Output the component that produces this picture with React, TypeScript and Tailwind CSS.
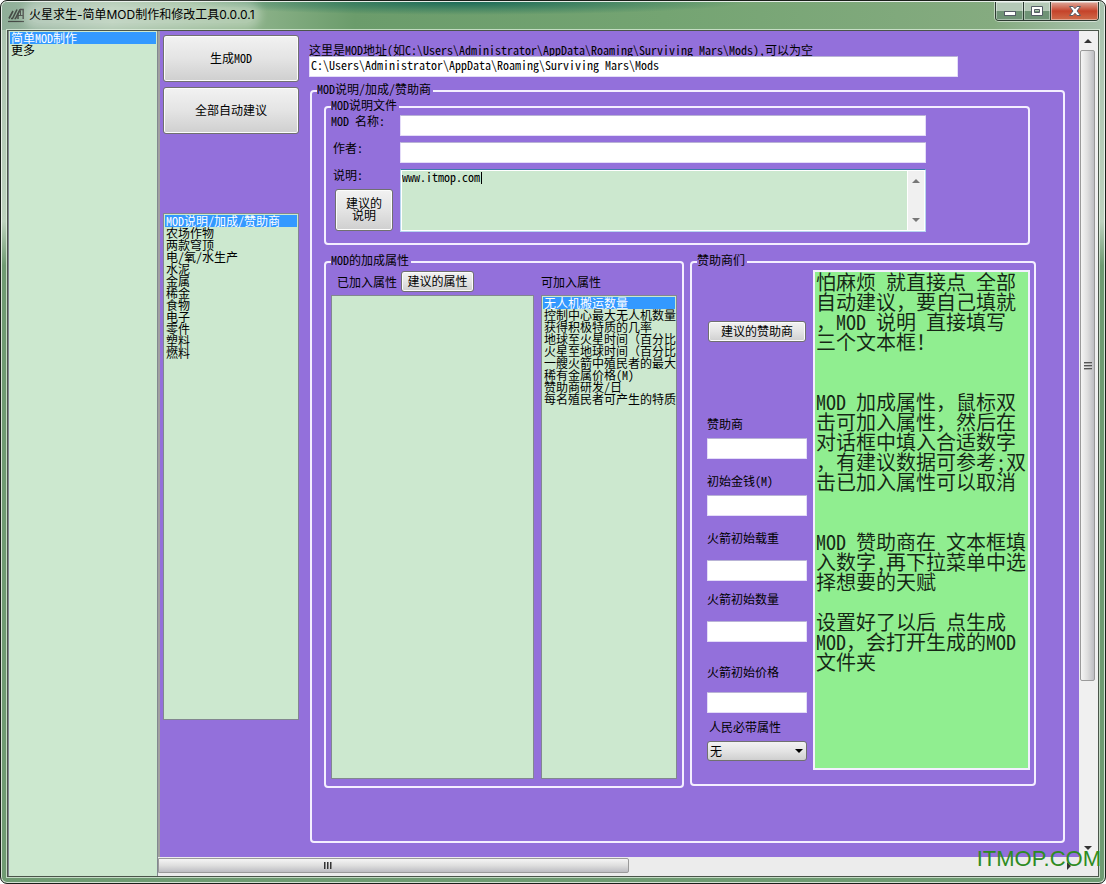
import { useState } from "react";
import type { ReactNode } from "react";

const categories = ["简单MOD制作", "更多"];

const sections = [
  "MOD说明/加成/赞助商",
  "农场作物",
  "两款穹顶",
  "电/氧/水生产",
  "水泥",
  "金属",
  "稀金",
  "食物",
  "电子",
  "零件",
  "塑料",
  "燃料",
];

const attributes = [
  "无人机搬运数量",
  "控制中心最大无人机数量",
  "获得积极特质的几率",
  "地球至火星时间（百分比）",
  "火星至地球时间（百分比）",
  "一艘火箭中殖民者的最大数量",
  "稀有金属价格(M)",
  "赞助商研发/日",
  "每名殖民者可产生的特质",
];

const sponsorFields = [
  { id: "sponsor", label: "赞助商", className: "mt-[76px] gap-2" },
  { id: "money", label: "初始金钱(M)", className: "mt-4 gap-2" },
  { id: "payload", label: "火箭初始载重", className: "mt-4 gap-4" },
  { id: "rockets", label: "火箭初始数量", className: "mt-3 gap-4" },
  { id: "price", label: "火箭初始价格", className: "mt-6 gap-3.5" },
];

const helpText = `怕麻烦 就直接点 全部
自动建议，要自己填就
，MOD 说明 直接填写
三个文本框！


MOD 加成属性，鼠标双
击可加入属性，然后在
对话框中填入合适数字
，有建议数据可参考;双
击已加入属性可以取消


MOD 赞助商在 文本框填
入数字,再下拉菜单中选
择想要的天赋

设置好了以后 点生成
MOD，会打开生成的MOD
文件夹`;

const inputClass =
  "h-[21px] w-full min-w-0 rounded-[1px] border border-[#e4dcf8] border-t-[#b9b3d6] bg-white px-px pb-1 leading-3 outline-none";

interface GroupProps {
  title: string;
  className?: string;
  bodyClassName?: string;
  children: ReactNode;
}

function Group({ title, className, bodyClassName, children }: GroupProps) {
  return (
    <fieldset className={`min-w-0 rounded-[4px] border-2 border-[#f4efff] ${className ?? ""}`}>
      <legend className="ml-[5px] pr-0.5 pb-1 leading-3">{title}</legend>
      <div className={bodyClassName}>{children}</div>
    </fieldset>
  );
}

function Button({ className, children }: { className?: string; children: ReactNode }) {
  return (
    <button
      type="button"
      className={`rounded-[3px] border border-[#707070] bg-linear-to-b from-[#f2f2f2] from-0% via-[#e4e4e4] via-50% to-[#cfcfcf] pb-0.5 leading-3 whitespace-nowrap shadow-[inset_0_0_0_1px_#fcfcfc] ${className ?? ""}`}
    >
      {children}
    </button>
  );
}

function ListBox({ label, items, className }: { label: string; items: string[]; className?: string }) {
  const [selected, setSelected] = useState(0);

  return (
    <ul
      role="listbox"
      aria-label={label}
      className={`overflow-hidden border border-[#828790] bg-[#cce8cf] p-px ${className ?? ""}`}
    >
      {items.map((item, index) => (
        <li
          key={item}
          role="option"
          aria-selected={index === selected}
          onClick={() => setSelected(index)}
          className={`h-3 pl-px leading-3 whitespace-nowrap ${index === selected ? "bg-[#3399ff] text-white" : ""}`}
        >
          {item}
        </li>
      ))}
    </ul>
  );
}

function Arrow({ className }: { className?: string }) {
  return (
    <svg viewBox="0 0 8 4" className={`h-1 w-2 ${className ?? ""}`} aria-hidden="true">
      <path d="M0 4 L4 0 L8 4 Z" fill="currentColor" />
    </svg>
  );
}

function TitleBar() {
  return (
    <header className="-mx-[5px] mt-px flex h-7 items-start justify-between rounded-t-[5px] bg-[radial-gradient(ellipse_280px_13px_at_42%_0,#1c6b58,transparent),linear-gradient(to_right,#8fae98,#a9c4ab_10%,#8fb48c_22%,#6b9c6b_32%,#74a472_60%,#85ab80_90%,#a9c2ad)] px-[5px]">
      <div className="flex items-center gap-1 pt-[5px] pl-px">
        <svg viewBox="0 0 17 16" className="h-4 w-[17px]" fill="none" stroke="#454a45" aria-hidden="true">
          <path d="M1 11.500 L5 4 M3 11.500 H4.500 L9 2.500 M6.500 11.500 H7.500 L12 2.500" strokeWidth="1.600" />
          <path d="M10 12 V7 L12.500 2.500 H15.200 V12" strokeWidth="1.500" />
          <path d="M10 8.500 H15 M12.500 4 V8" />
          <path d="M0 14.500 H16" strokeWidth="1.200" />
        </svg>
        <h1 className="rounded-full bg-white/30 font-['Inter','Noto_Sans_CJK_SC',sans-serif] leading-4 shadow-[0_0_8px_6px_rgba(255,255,255,0.3)]">
          火星求生-简单MOD制作和修改工具0.0.0.1
        </h1>
      </div>
      <div className="flex h-[19px] overflow-hidden rounded-b-[4px] border border-t-0 border-[#2b3a30] shadow-[0_0_0_1px_rgba(255,255,255,0.5)]">
        <button type="button" aria-label="最小化" className="flex w-7 items-center justify-center border-r border-[#2b3a30] bg-linear-to-b from-[#b5c9b7] from-50% to-[#6f9376] to-50% shadow-[inset_0_0_0_1px_rgba(255,255,255,0.4)]">
          <svg viewBox="0 0 12 12" className="size-3" aria-hidden="true">
            <rect x="0.500" y="6.500" width="11" height="4" fill="#fff" stroke="#555c66" />
          </svg>
        </button>
        <button type="button" aria-label="最大化" className="flex w-[27px] items-center justify-center border-r border-[#2b3a30] bg-linear-to-b from-[#b5c9b7] from-50% to-[#6f9376] to-50% shadow-[inset_0_0_0_1px_rgba(255,255,255,0.4)]">
          <svg viewBox="0 0 12 12" className="size-3" aria-hidden="true">
            <path d="M0.500 1.500 H11.500 V10.500 H0.500 Z M3.500 4.500 V7.500 H8.500 V4.500 Z" fill="#fff" fillRule="evenodd" stroke="#555c66" />
          </svg>
        </button>
        <button type="button" aria-label="关闭" className="flex w-[47px] items-center justify-center bg-linear-to-b from-[#dba79a] from-0% via-[#c5422a] via-50% to-[#cf6a4a] shadow-[inset_0_0_0_1px_rgba(255,255,255,0.4)]">
          <svg viewBox="0 0 12 12" className="size-3" aria-hidden="true">
            <path d="M0.500 1.500 H4 L6 3.700 L8 1.500 H11.500 L8 6 L11.500 10.500 H8 L6 8.300 L4 10.500 H0.500 L4 6 Z" fill="#fff" stroke="#555c66" />
          </svg>
        </button>
      </div>
    </header>
  );
}

function DescriptionGroup() {
  return (
    <Group title="MOD说明文件" className="mr-1.5" bodyClassName="pr-[102px] pb-[11px] pl-[5px]">
      <div className="grid grid-cols-[69px_1fr] items-start gap-y-1.5">
        <label htmlFor="mod-name" className="leading-3">MOD 名称:</label>
        <input id="mod-name" className={inputClass} />
        <label htmlFor="author" className="pl-0.5 leading-3">作者:</label>
        <input id="author" className={inputClass} />
        <div className="flex flex-col items-start gap-2 pl-0.5">
          <label htmlFor="description" className="leading-3">说明:</label>
          <Button className="ml-0.5 h-[42px] w-[58px]">
            建议的
            <br />
            说明
          </Button>
        </div>
        <div className="relative flex h-[63px] border border-[#b7d5f0] border-t-[#3d7bad] bg-white p-px">
          <textarea
            id="description"
            defaultValue="www.itmop.com"
            className="min-w-0 flex-1 resize-none bg-[#cce8cf] leading-3 outline-none"
          />
          <span className="absolute top-0.5 left-20 h-3 w-px bg-black" />
          <div className="flex w-[17px] flex-col items-center justify-between border-l border-white bg-[#f0f0f0] py-2 text-[#777]">
            <Arrow />
            <Arrow className="rotate-180" />
          </div>
        </div>
      </div>
    </Group>
  );
}

function AttributeGroup() {
  return (
    <Group title="MOD的加成属性" className="flex-1" bodyClassName="px-[5px] pb-[7px]">
      <div className="grid grid-cols-[203px_minmax(0,1fr)] gap-x-[7px]">
        <div className="flex h-[25px] items-center gap-1 pb-0.5 pl-1.5">
          <span>已加入属性</span>
          <Button className="h-[21px] w-[73px]">建议的属性</Button>
        </div>
        <div className="flex h-[25px] items-center pb-0.5">可加入属性</div>
        <ListBox label="已加入属性" items={[]} className="h-[484px]" />
        <ListBox label="可加入属性" items={attributes} className="h-[484px]" />
      </div>
    </Group>
  );
}

function SponsorGroup() {
  return (
    <Group title="赞助商们" className="w-[346px] shrink-0" bodyClassName="flex gap-1.5 pr-1 pb-3.5 pl-[15px]">
      <div className="flex w-[100px] flex-col pt-[51px]">
        <Button className="mx-px h-[21px]">建议的赞助商</Button>
        {sponsorFields.map((field) => (
          <div key={field.id} className={`flex flex-col ${field.className}`}>
            <label htmlFor={field.id} className="leading-3">{field.label}</label>
            <input id={field.id} className={inputClass} />
          </div>
        ))}
        <div className="mt-2 flex flex-col gap-2">
          <label htmlFor="trait" className="pl-0.5 leading-3">人民必带属性</label>
          <div className="relative">
            <select
              id="trait"
              className="h-5 w-full appearance-none rounded-[3px] border border-[#707070] bg-linear-to-b from-[#f2f2f2] from-0% via-[#e4e4e4] via-50% to-[#cfcfcf] pl-0.5 leading-3"
            >
              <option>无</option>
            </select>
            <Arrow className="pointer-events-none absolute top-2 right-1 rotate-180" />
          </div>
        </div>
      </div>
      <textarea
        aria-label="使用说明"
        wrap="off"
        defaultValue={helpText}
        className="h-[500px] min-w-0 flex-1 resize-none overflow-hidden border-2 border-[#f4efff] bg-[#90ee90] px-px text-[20px] leading-5 text-black/85 outline-none"
      />
    </Group>
  );
}

function VerticalScrollbar() {
  return (
    <div className="flex w-[19px] shrink-0 flex-col items-center bg-[#f0f0f0] pr-0.5">
      <div className="flex h-[19px] items-center text-[#333]">
        <Arrow />
      </div>
      <div className="flex h-[631px] w-[15px] flex-col items-center justify-center gap-px rounded-[2px] border border-[#9a9a9a] bg-linear-to-r from-[#f5f5f5] via-[#dedede] to-[#bdbdc2]">
        <span className="h-0.5 w-2 border-t border-[#555] bg-[#aaa]" />
        <span className="h-0.5 w-2 border-t border-[#555] bg-[#aaa]" />
        <span className="h-0.5 w-2 border-t border-[#555] bg-[#aaa]" />
      </div>
      <div className="mt-auto flex h-[18px] items-center text-[#333]">
        <Arrow className="rotate-180" />
      </div>
    </div>
  );
}

function HorizontalScrollbar() {
  return (
    <div className="flex h-[19px] items-center justify-between bg-[#ececec] pb-0.5 text-[#333]">
      <div className="flex h-[15px] w-[471px] items-center justify-center gap-px rounded-r-[2px] border border-[#9a9a9a] bg-linear-to-b from-[#f5f5f5] via-[#dedede] to-[#bdbdc2] pr-[131px]">
        <span className="h-[7px] w-0.5 border-l border-[#333] bg-[#888]" />
        <span className="h-[7px] w-0.5 border-l border-[#333] bg-[#888]" />
        <span className="h-[7px] w-0.5 border-l border-[#333] bg-[#888]" />
      </div>
      <Arrow className="mr-[25px] rotate-90" />
    </div>
  );
}

export default function App() {
  return (
    <div className="relative flex min-h-screen flex-col rounded-[7px] border border-[#1a1f1a] bg-linear-to-b from-[#a9c2ad] via-[#bdd2be] via-25% to-[#6f9b72] to-30% px-[6px] pb-[6px] font-['Noto_Sans_Mono_CJK_SC','Liberation_Mono','Noto_Sans_CJK_SC',monospace] text-[12px] leading-3 text-black shadow-[inset_0_0_0_1px_rgba(255,255,255,0.7)]">
      <TitleBar />
      <div className="flex flex-1 border border-[#4a554a] shadow-[0_0_0_1px_rgba(230,245,230,0.7)]">
        <ListBox label="分类" items={categories} className="w-[150px] shrink-0 border-y-0" />
        <div className="flex min-w-0 flex-1 flex-col">
          <div className="flex flex-1">
            <main className="flex min-w-0 flex-1 gap-2.5 border-l-2 border-[#a0a0a0] bg-[#9370db] pr-3.5 pl-[3px]">
              <div className="flex w-[136px] shrink-0 flex-col pt-1">
                <Button className="h-[47px]">生成MOD</Button>
                <Button className="mt-[5px] h-[47px]">全部自动建议</Button>
                <ListBox label="项目" items={sections} className="mt-[79px] h-[507px]" />
              </div>
              <div className="flex min-w-0 flex-1 flex-col pt-[13px] pb-3.5">
                <label htmlFor="mod-path" className="leading-3">
                  这里是MOD地址(如C:\Users\Administrator\AppData\Roaming\Surviving Mars\Mods),可以为空
                </label>
                <div className="pr-[107px]">
                  <input
                    id="mod-path"
                    defaultValue="C:\Users\Administrator\AppData\Roaming\Surviving Mars\Mods"
                    className={inputClass}
                  />
                </div>
                <Group title="MOD说明/加成/赞助商" className="mt-1.5 ml-px flex-1" bodyClassName="pr-[27px] pl-3">
                  <DescriptionGroup />
                  <div className="mt-[9px] flex items-start gap-1.5">
                    <AttributeGroup />
                    <SponsorGroup />
                  </div>
                </Group>
              </div>
            </main>
            <VerticalScrollbar />
          </div>
          <HorizontalScrollbar />
        </div>
      </div>
      <p className="pointer-events-none absolute right-1 bottom-3 font-['Liberation_Sans',sans-serif] text-[22px] leading-6 text-[#2e8b22]">
        ITMOP.COM
      </p>
    </div>
  );
}
